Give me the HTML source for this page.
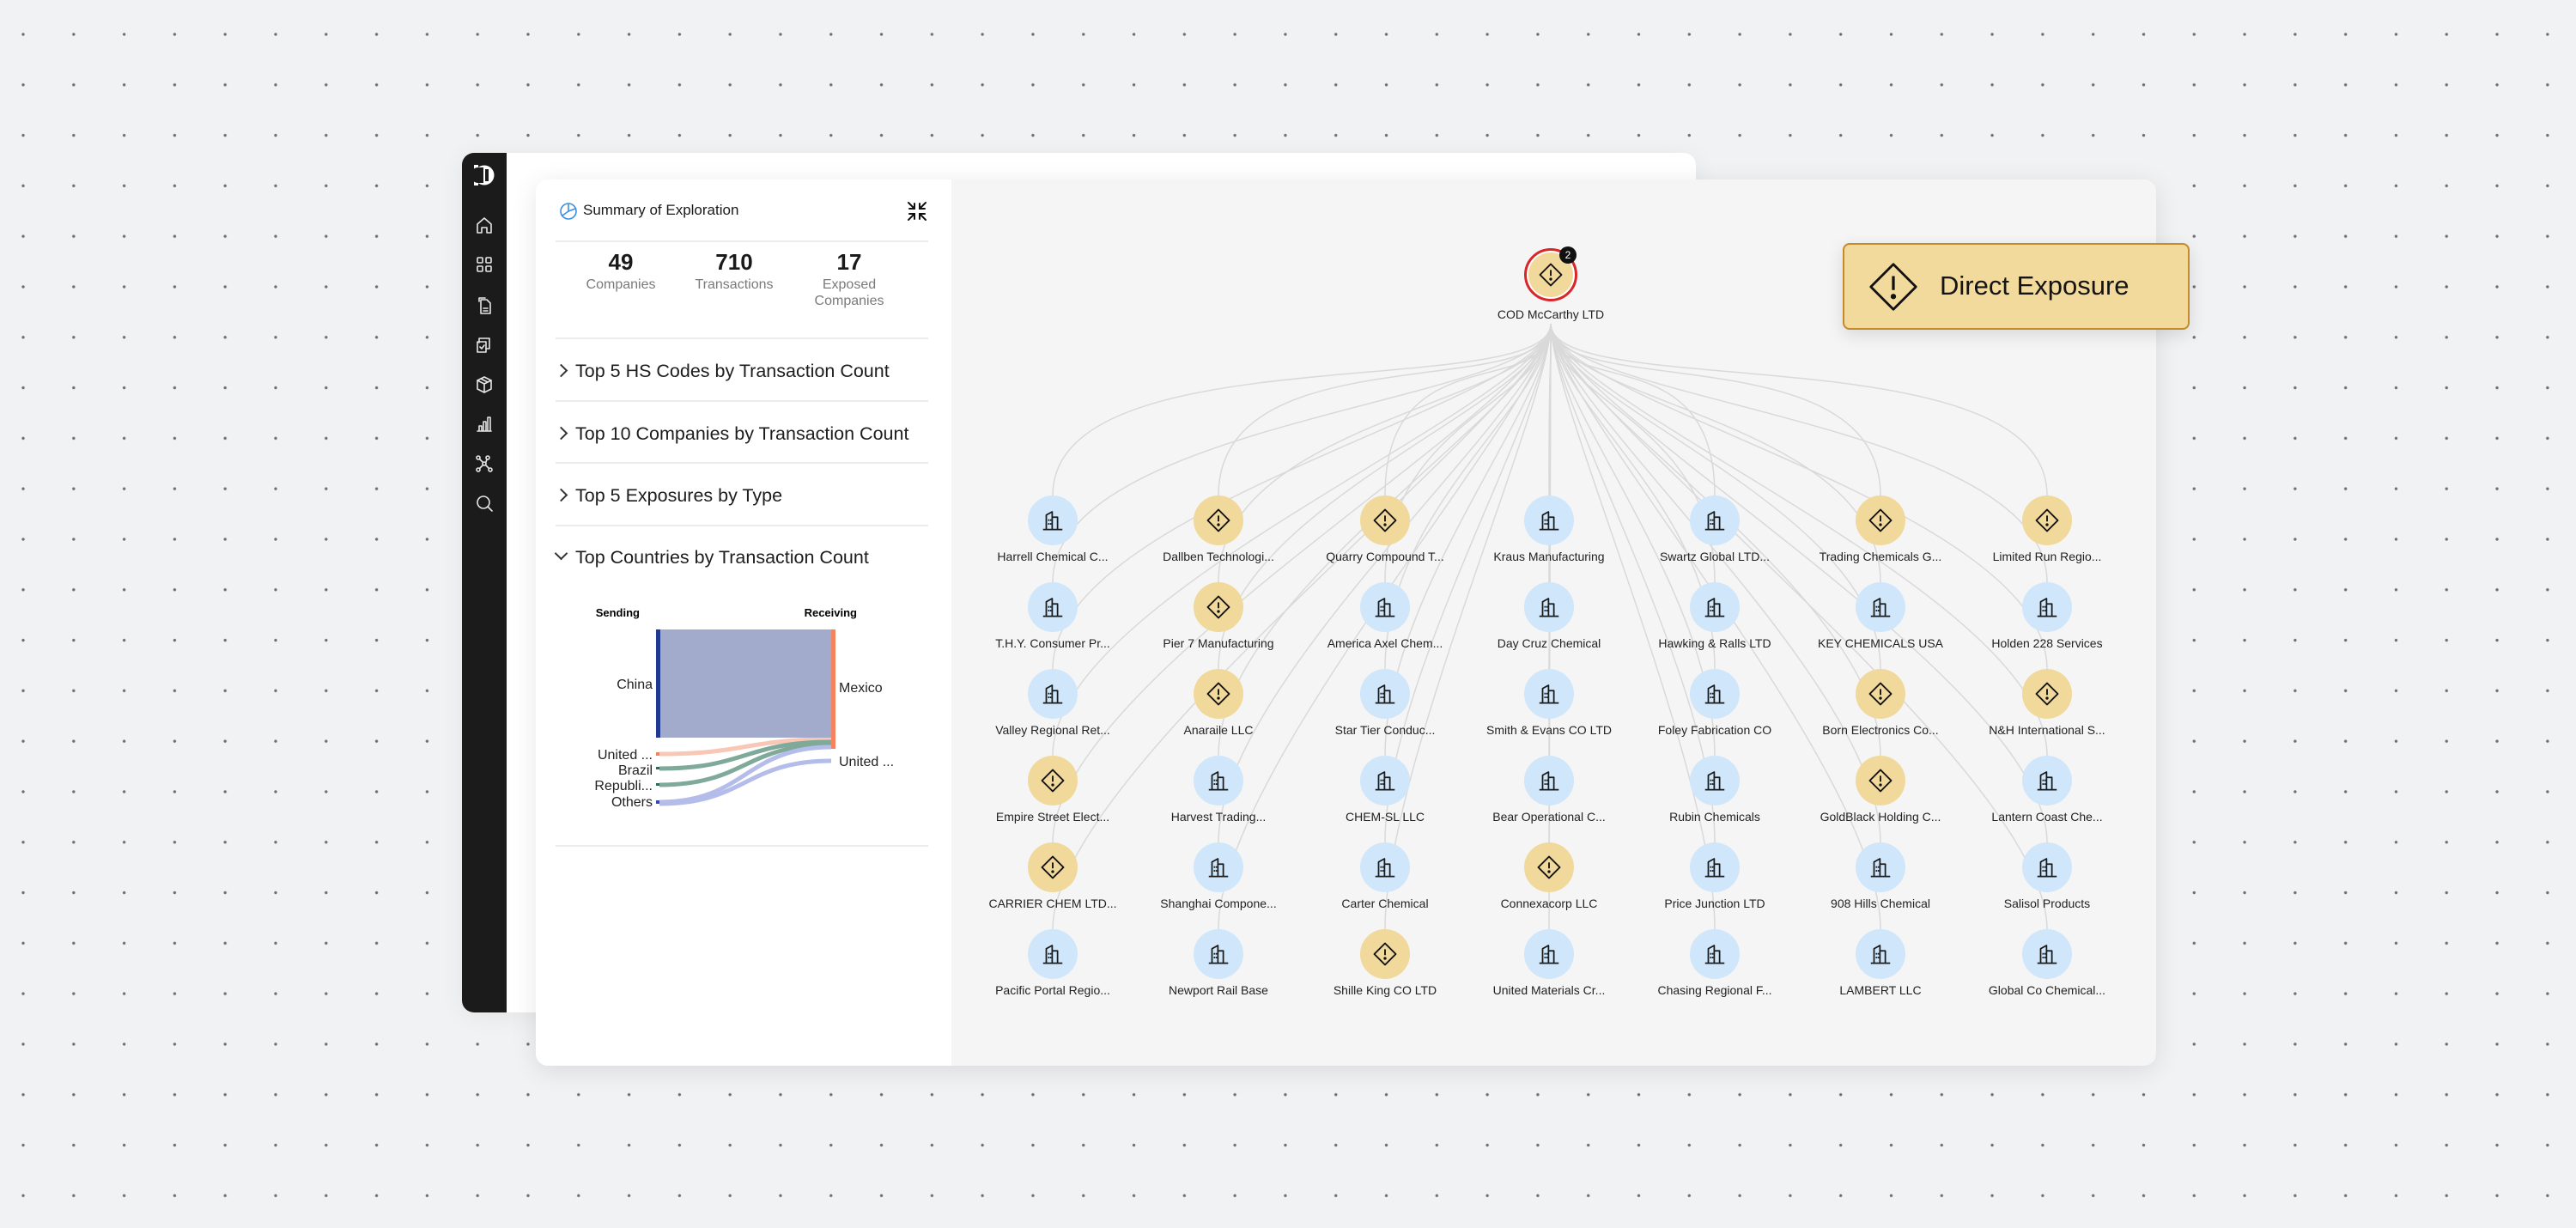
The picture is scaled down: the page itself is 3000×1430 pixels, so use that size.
<!DOCTYPE html>
<html><head><meta charset="utf-8"><style>
*{box-sizing:border-box;margin:0;padding:0}
html,body{width:3000px;height:1430px;overflow:hidden}
body{background-color:#f1f2f4;background-image:radial-gradient(circle,#6d6e72 1.4px,transparent 2px);background-size:58.8px 58.8px;background-position:-2.4px 10.6px;font-family:"Liberation Sans",sans-serif;position:relative;color:#1a1a1a}
.abs{position:absolute}
#back{left:538px;top:178px;width:1437px;height:1001px;background:#fff;border-radius:14px;box-shadow:0 4px 30px rgba(0,0,0,.06);overflow:hidden}
#side{left:0;top:0;width:52px;height:1001px;background:#1b1b1b}
#card{left:624px;top:209px;width:1887px;height:1032px;background:#f5f5f5;border-radius:14px;box-shadow:0 6px 30px rgba(0,0,0,.10);overflow:hidden}
#panel{left:0;top:0;width:484px;height:1032px;background:#fff}
.hr{position:absolute;height:2px;background:#ececec}
.acc{position:absolute;left:46px;font-size:21.5px;color:#1d1d1d}
.chev{position:absolute;left:24px;width:11px;height:11px;border-right:2px solid #333;border-top:2px solid #333;transform:rotate(45deg)}
.num{position:absolute;font-size:26px;font-weight:bold;text-align:center;width:160px}
.lab{position:absolute;font-size:16px;color:#7a7a7a;text-align:center;width:160px;line-height:19px}
.n{position:absolute;width:58px;height:58px;border-radius:50%;display:flex;align-items:center;justify-content:center}
.b{background:#cfe6fb}.w{background:#f1d99c}
.t{position:absolute;width:200px;text-align:center;font-size:14px;color:#222;white-space:nowrap}
</style></head><body>

<div id="back" class="abs">
 <div id="side" class="abs">
  <svg class="abs" style="left:11px;top:14px" width="30" height="24" viewBox="0 0 30 24">
   <circle cx="15" cy="12" r="11.5" fill="#fff"/>
   <rect x="3" y="0" width="5" height="24" fill="#fff"/>
   <path d="M8 3 h6 v18 h-6 a9 9 0 0 1 0 -18z" fill="#1b1b1b"/>
   <rect x="16" y="5" width="4" height="14" fill="#1b1b1b"/>
  </svg>
  <svg class="abs" style="left:14px;top:72px" width="24" height="440" viewBox="0 0 24 440" fill="none" stroke="#e6e6e6" stroke-width="1.6" stroke-linecap="round" stroke-linejoin="round">
   <path d="M4 11 L12 4 L20 11 V21 H15 V15 H9 V21 H4Z"/>
   <g transform="translate(0,46)"><rect x="4" y="4" width="6" height="6" rx="1"/><rect x="14" y="4" width="6" height="6" rx="1"/><rect x="4" y="14" width="6" height="6" rx="1"/><rect x="14" y="14" width="6" height="6" rx="1"/></g>
   <g transform="translate(0,94)"><path d="M8 5 H15 L19 9 V21 H8Z"/><path d="M6 7 V3 H13"/><path d="M11 15 H16 M11 18 H16"/></g>
   <g transform="translate(0,140)"><path d="M6 9 V4 H18 V16 H14"/><path d="M4 8 H14 V20 H4Z"/><path d="M7 14 L9 16 L12 12"/></g>
   <g transform="translate(0,186)"><path d="M12 3 L20 7 V17 L12 21 L4 17 V7Z"/><path d="M4 7 L12 11 L20 7 M12 11 V21 M8 5 L16 9"/></g>
   <g transform="translate(0,232)"><path d="M4 20 H20 M6 20 V14 H9 V20 M11 20 V9 H14 V20 M16 20 V4 H19 V20"/></g>
   <g transform="translate(0,278)"><circle cx="5" cy="19" r="2"/><circle cx="19" cy="19" r="2"/><circle cx="5" cy="5" r="2"/><circle cx="16" cy="5" r="2"/><circle cx="12" cy="12" r="2"/><path d="M7 17 L10 14 M14 14 L17 17 M7 7 L10 10 M14 10 L15 7"/></g>
   <g transform="translate(0,324)"><circle cx="11" cy="11" r="7"/><path d="M16 16 L21 21"/></g>
  </svg>
 </div>
</div>

<div id="card" class="abs">
 <svg class="abs" style="left:0;top:0" width="1887" height="1032" id="edges" fill="none" stroke="#d9d9d9" stroke-width="1.5"></svg>
 <div id="panel" class="abs">
  <svg class="abs" style="left:27px;top:26px" width="22" height="22" viewBox="0 0 22 22" fill="none" stroke="#3b8fe0" stroke-width="1.6"><circle cx="11" cy="11" r="9"/><path d="M11 2 V11 L4 16"/><path d="M11 11 L19 8"/></svg>
  <div class="abs" style="left:55px;top:26px;font-size:17px">Summary of Exploration</div>
  <svg class="abs" style="left:431px;top:24px" width="26" height="26" viewBox="0 0 26 26" fill="none" stroke="#111" stroke-width="2" stroke-linecap="round"><path d="M3 3 L10 10 M10 4 V10 H4"/><path d="M23 3 L16 10 M16 4 V10 H22"/><path d="M3 23 L10 16 M10 22 V16 H4"/><path d="M23 23 L16 16 M16 22 V16 H22"/></svg>
  <div class="hr" style="left:23px;top:71px;width:434px"></div>
  <div class="num" style="left:19px;top:81px">49</div>
  <div class="num" style="left:151px;top:81px">710</div>
  <div class="num" style="left:285px;top:81px">17</div>
  <div class="lab" style="left:19px;top:113px">Companies</div>
  <div class="lab" style="left:151px;top:113px">Transactions</div>
  <div class="lab" style="left:285px;top:113px">Exposed<br>Companies</div>
  <div class="hr" style="left:23px;top:184px;width:434px"></div>
  <div class="chev" style="top:217px"></div><div class="acc" style="top:211px">Top 5 HS Codes by Transaction Count</div>
  <div class="hr" style="left:23px;top:257px;width:434px"></div>
  <div class="chev" style="top:290px"></div><div class="acc" style="top:284px">Top 10 Companies by Transaction Count</div>
  <div class="hr" style="left:23px;top:329px;width:434px"></div>
  <div class="chev" style="top:362px"></div><div class="acc" style="top:356px">Top 5 Exposures by Type</div>
  <div class="hr" style="left:23px;top:402px;width:434px"></div>
  <div class="chev" style="top:430px;transform:rotate(135deg)"></div><div class="acc" style="top:428px">Top Countries by Transaction Count</div>
  <svg class="abs" style="left:0;top:0" width="484" height="800" font-family="Liberation Sans, sans-serif">
   <text x="121" y="509" font-size="13" font-weight="bold" text-anchor="end">Sending</text>
   <text x="374" y="509" font-size="13" font-weight="bold" text-anchor="end">Receiving</text>
   <g fill="none" stroke-width="5" stroke-linecap="butt">
    <path d="M144 669 C244 669 244 652 344 652" stroke="#f9c7b6"/>
    <path d="M144 686 C244 686 244 655 344 655" stroke="#7fa999"/>
    <path d="M144 705 C244 705 244 658 344 658" stroke="#7fa999"/>
    <path d="M144 725 C244 725 244 661 344 661" stroke="#b4bce9"/>
    <path d="M144 727 C244 727 244 677 344 677" stroke="#b4bce9"/>
   </g>
   <rect x="143" y="524" width="201" height="126" fill="#a3abcc"/>
   <rect x="140" y="524" width="5" height="126" fill="#1f3a8f"/>
   <rect x="344" y="524" width="5" height="139" fill="#f4845f"/>
   <rect x="140" y="667" width="4" height="4" fill="#f4845f"/>
   <rect x="140" y="684" width="4" height="3" fill="#2f6b55"/>
   <rect x="140" y="703" width="4" height="3" fill="#2f6b55"/>
   <rect x="140" y="723" width="4" height="4" fill="#3848b0"/>
   <g font-size="16" fill="#222">
    <text x="136" y="593" text-anchor="end">China</text>
    <text x="136" y="675" text-anchor="end">United ...</text>
    <text x="136" y="693" text-anchor="end">Brazil</text>
    <text x="136" y="711" text-anchor="end">Republi...</text>
    <text x="136" y="730" text-anchor="end">Others</text>
    <text x="353" y="597">Mexico</text>
    <text x="353" y="683">United ...</text>
   </g>
  </svg>
  <div class="hr" style="left:23px;top:775px;width:434px"></div>
 </div>

 <!-- top node -->
 <div class="n w" style="left:1151px;top:80px;width:62px;height:62px;border:3px solid #d8262b;box-shadow:inset 0 0 0 2px #fff"><svg width="30" height="30" viewBox="0 0 24 24" fill="none" stroke="#111" stroke-width="1.5" stroke-linejoin="round"><path d="M12 2 L22 12 L12 22 L2 12Z"/><path d="M12 7.5 V13"/><circle cx="12" cy="16" r=".6" fill="#111"/></svg></div>
 <div class="abs" style="left:1192px;top:78px;width:20px;height:20px;border-radius:50%;background:#111;color:#fff;font-size:12px;text-align:center;line-height:20px">2</div>
 <div class="t" style="left:1082px;top:149px">COD McCarthy LTD</div>

 <div id="nodes">
 <!-- row1 y=397 -->
 <div class="n b" style="left:573px;top:368px"></div><div class="t" style="left:502px;top:431px">Harrell Chemical C...</div>
 <div class="n w" style="left:766px;top:368px"></div><div class="t" style="left:695px;top:431px">Dallben Technologi...</div>
 <div class="n w" style="left:960px;top:368px"></div><div class="t" style="left:889px;top:431px">Quarry Compound T...</div>
 <div class="n b" style="left:1151px;top:368px"></div><div class="t" style="left:1080px;top:431px">Kraus Manufacturing</div>
 <div class="n b" style="left:1344px;top:368px"></div><div class="t" style="left:1273px;top:431px">Swartz Global LTD...</div>
 <div class="n w" style="left:1537px;top:368px"></div><div class="t" style="left:1466px;top:431px">Trading Chemicals G...</div>
 <div class="n w" style="left:1731px;top:368px"></div><div class="t" style="left:1660px;top:431px">Limited Run Regio...</div>
 <!-- row2 -->
 <div class="n b" style="left:573px;top:469px"></div><div class="t" style="left:502px;top:532px">T.H.Y. Consumer Pr...</div>
 <div class="n w" style="left:766px;top:469px"></div><div class="t" style="left:695px;top:532px">Pier 7 Manufacturing</div>
 <div class="n b" style="left:960px;top:469px"></div><div class="t" style="left:889px;top:532px">America Axel Chem...</div>
 <div class="n b" style="left:1151px;top:469px"></div><div class="t" style="left:1080px;top:532px">Day Cruz Chemical</div>
 <div class="n b" style="left:1344px;top:469px"></div><div class="t" style="left:1273px;top:532px">Hawking &amp; Ralls LTD</div>
 <div class="n b" style="left:1537px;top:469px"></div><div class="t" style="left:1466px;top:532px">KEY CHEMICALS USA</div>
 <div class="n b" style="left:1731px;top:469px"></div><div class="t" style="left:1660px;top:532px">Holden 228 Services</div>
 <!-- row3 -->
 <div class="n b" style="left:573px;top:570px"></div><div class="t" style="left:502px;top:633px">Valley Regional Ret...</div>
 <div class="n w" style="left:766px;top:570px"></div><div class="t" style="left:695px;top:633px">Anaraile LLC</div>
 <div class="n b" style="left:960px;top:570px"></div><div class="t" style="left:889px;top:633px">Star Tier Conduc...</div>
 <div class="n b" style="left:1151px;top:570px"></div><div class="t" style="left:1080px;top:633px">Smith &amp; Evans CO LTD</div>
 <div class="n b" style="left:1344px;top:570px"></div><div class="t" style="left:1273px;top:633px">Foley Fabrication CO</div>
 <div class="n w" style="left:1537px;top:570px"></div><div class="t" style="left:1466px;top:633px">Born Electronics Co...</div>
 <div class="n w" style="left:1731px;top:570px"></div><div class="t" style="left:1660px;top:633px">N&amp;H International S...</div>
 <!-- row4 -->
 <div class="n w" style="left:573px;top:671px"></div><div class="t" style="left:502px;top:734px">Empire Street Elect...</div>
 <div class="n b" style="left:766px;top:671px"></div><div class="t" style="left:695px;top:734px">Harvest Trading...</div>
 <div class="n b" style="left:960px;top:671px"></div><div class="t" style="left:889px;top:734px">CHEM-SL LLC</div>
 <div class="n b" style="left:1151px;top:671px"></div><div class="t" style="left:1080px;top:734px">Bear Operational C...</div>
 <div class="n b" style="left:1344px;top:671px"></div><div class="t" style="left:1273px;top:734px">Rubin Chemicals</div>
 <div class="n w" style="left:1537px;top:671px"></div><div class="t" style="left:1466px;top:734px">GoldBlack Holding C...</div>
 <div class="n b" style="left:1731px;top:671px"></div><div class="t" style="left:1660px;top:734px">Lantern Coast Che...</div>
 <!-- row5 -->
 <div class="n w" style="left:573px;top:772px"></div><div class="t" style="left:502px;top:835px">CARRIER CHEM LTD...</div>
 <div class="n b" style="left:766px;top:772px"></div><div class="t" style="left:695px;top:835px">Shanghai Compone...</div>
 <div class="n b" style="left:960px;top:772px"></div><div class="t" style="left:889px;top:835px">Carter Chemical</div>
 <div class="n w" style="left:1151px;top:772px"></div><div class="t" style="left:1080px;top:835px">Connexacorp LLC</div>
 <div class="n b" style="left:1344px;top:772px"></div><div class="t" style="left:1273px;top:835px">Price Junction LTD</div>
 <div class="n b" style="left:1537px;top:772px"></div><div class="t" style="left:1466px;top:835px">908 Hills Chemical</div>
 <div class="n b" style="left:1731px;top:772px"></div><div class="t" style="left:1660px;top:835px">Salisol Products</div>
 <!-- row6 -->
 <div class="n b" style="left:573px;top:873px"></div><div class="t" style="left:502px;top:936px">Pacific Portal Regio...</div>
 <div class="n b" style="left:766px;top:873px"></div><div class="t" style="left:695px;top:936px">Newport Rail Base</div>
 <div class="n w" style="left:960px;top:873px"></div><div class="t" style="left:889px;top:936px">Shille King CO LTD</div>
 <div class="n b" style="left:1151px;top:873px"></div><div class="t" style="left:1080px;top:936px">United Materials Cr...</div>
 <div class="n b" style="left:1344px;top:873px"></div><div class="t" style="left:1273px;top:936px">Chasing Regional F...</div>
 <div class="n b" style="left:1537px;top:873px"></div><div class="t" style="left:1466px;top:936px">LAMBERT LLC</div>
 <div class="n b" style="left:1731px;top:873px"></div><div class="t" style="left:1660px;top:936px">Global Co Chemical...</div>
 </div>
</div>

<div class="abs" style="left:2146px;top:283px;width:404px;height:101px;background:#f2d99c;border:2px solid #c58a2a;border-radius:8px;box-shadow:0 6px 20px rgba(0,0,0,.12)">
 <svg class="abs" style="left:27px;top:19px" width="60" height="60" viewBox="0 0 24 24" fill="none" stroke="#111" stroke-width="1.1" stroke-linejoin="round"><path d="M12 1.5 L22.5 12 L12 22.5 L1.5 12Z"/><path d="M12 7 V13.5" stroke-width="1.3"/><circle cx="12" cy="16.5" r=".7" fill="#111"/></svg>
 <div class="abs" style="left:111px;top:30px;font-size:31px;color:#141414">Direct Exposure</div>
</div>

<script>
(function(){
var B='<svg width="30" height="30" viewBox="0 0 24 24" fill="none" stroke="#1a1a1a" stroke-width="1.4" stroke-linejoin="round"><path d="M3 20.5 H21"/><path d="M6 20.5 V7 L11.5 4 V20.5"/><path d="M11.5 9 H16.5 V20.5"/><g fill="#1a1a1a" stroke="none"><rect x="7.6" y="11" width="1.3" height="1.5"/><rect x="9.4" y="11" width="1.3" height="1.5"/><rect x="7.6" y="14.5" width="1.3" height="1.5"/><rect x="9.4" y="14.5" width="1.3" height="1.5"/></g></svg>';
var W='<svg width="30" height="30" viewBox="0 0 24 24" fill="none" stroke="#111" stroke-width="1.5" stroke-linejoin="round"><path d="M12 2 L22 12 L12 22 L2 12Z"/><path d="M12 7.5 V13"/><circle cx="12" cy="16" r=".6" fill="#111"/></svg>';
var ns=document.querySelectorAll('#nodes .n'),s='';
ns.forEach(function(n){n.innerHTML=n.classList.contains('b')?B:W;
 var x=parseFloat(n.style.left)+29,y=parseFloat(n.style.top);
 s+='<path d="M1182 168 C1182 260 '+x+' '+(y-190)+' '+x+' '+y+'"/>';});
document.getElementById('edges').innerHTML=s;
})();
</script>
</body></html>
